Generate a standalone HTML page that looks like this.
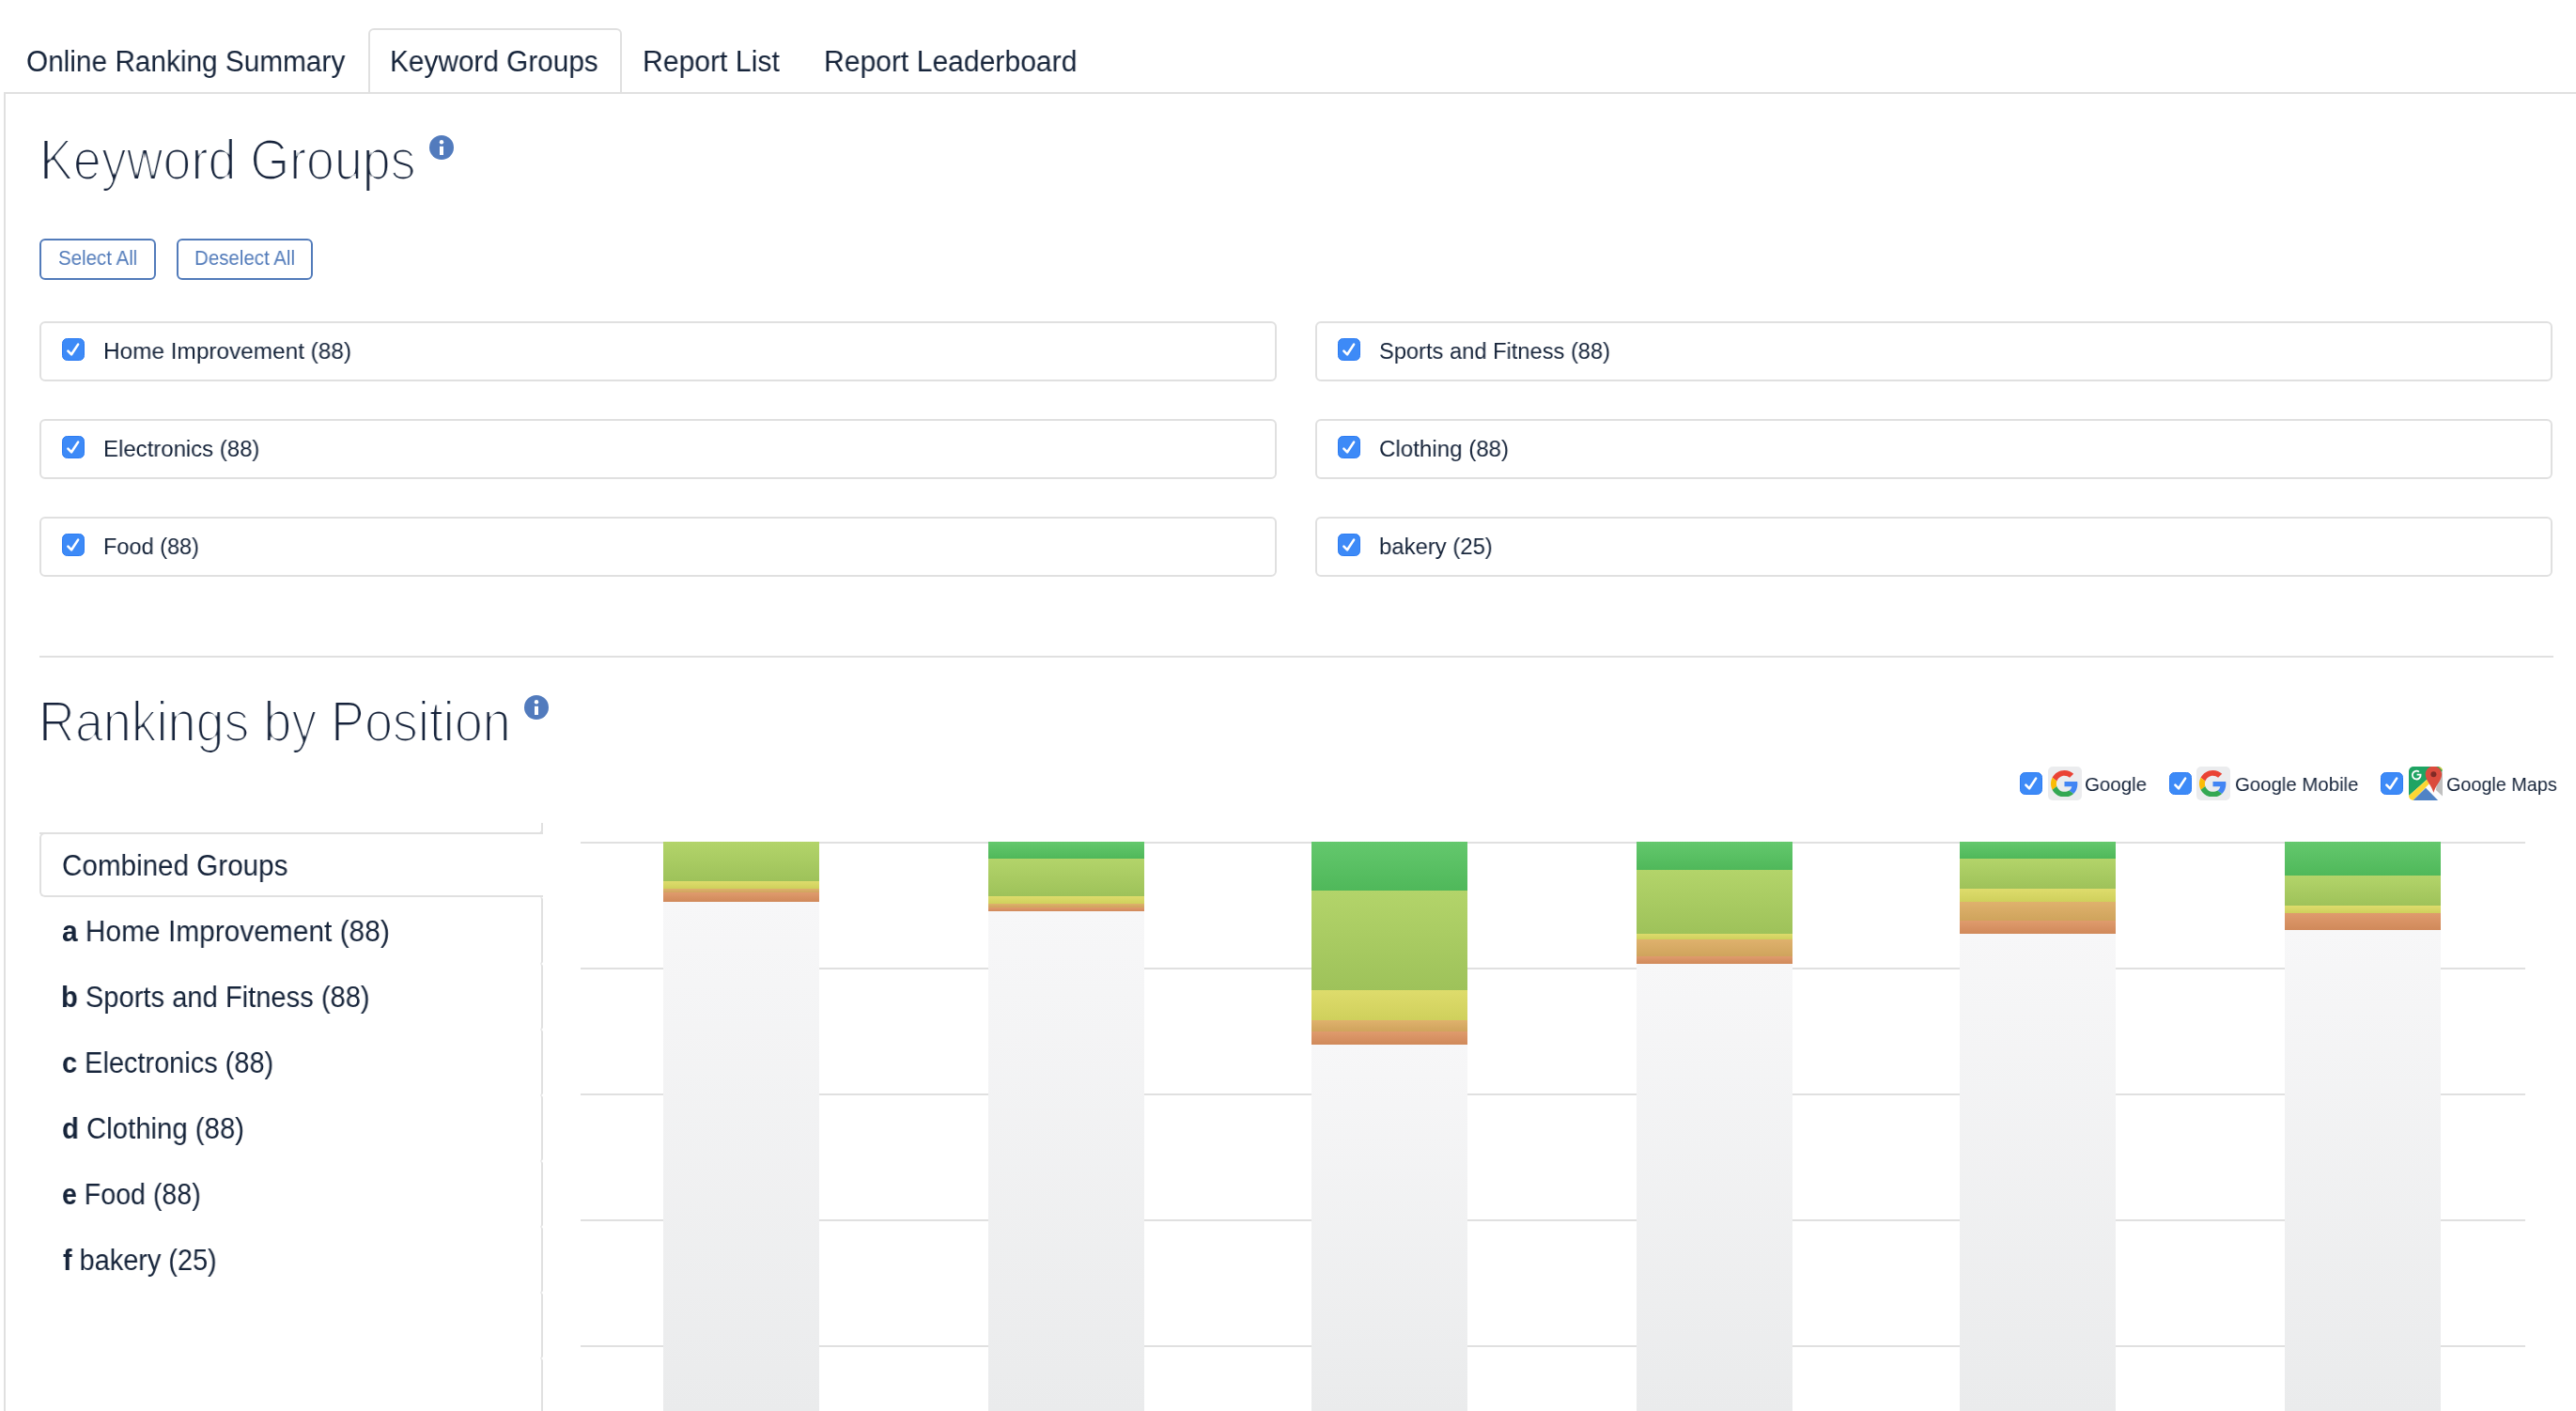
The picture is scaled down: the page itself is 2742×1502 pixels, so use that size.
<!DOCTYPE html>
<html><head><meta charset="utf-8"><title>Keyword Groups</title><style>
html,body{margin:0;padding:0;background:#fff}
body{width:2742px;height:1502px;overflow:hidden;position:relative;font-family:"Liberation Sans",sans-serif}
.a{position:absolute;box-sizing:border-box}
.t{position:absolute;white-space:nowrap;line-height:1;transform-origin:0 0;font-family:"Liberation Sans",sans-serif;will-change:transform}
.t b{font-weight:700}
.bd{border:2px solid #e0e0e0}
.cb{position:absolute;width:24px;height:24px;border-radius:5.5px;background:#3d8af7;box-sizing:border-box;border:1px solid #2c7cf3}
.cb svg{position:absolute;left:-1px;top:-1px}
.info{position:absolute;width:26px;height:26px}
.gbox{position:absolute;width:36px;height:36px;border-radius:5px;background:#ebecee}
.grid{position:absolute;left:618px;width:2070px;height:2px;background:#e0e0e0}
.bar{position:absolute;width:166px}
.bar div{position:absolute;left:0;width:166px}
</style></head><body>
<svg width="0" height="0" style="position:absolute"><defs><filter id="erode" x="-5%" y="-20%" width="110%" height="140%"><feMorphology operator="erode" radius="1"/></filter></defs></svg>
<div class="a bd" style="left:4px;top:98px;width:2800px;height:1500px"></div>
<div class="a" style="left:392px;top:30px;width:270px;height:68px;border:2px solid #e0e0e0;border-bottom:none;border-radius:6px 6px 0 0;background:#fff"></div>
<div class="info" style="left:457px;top:144px"><svg width="26" height="26" viewBox="0 0 26 26"><circle cx="13" cy="13" r="13" fill="#527bbd"/><circle cx="13" cy="7.2" r="2.2" fill="#fff"/><rect x="11" y="11.8" width="4" height="9.2" fill="#fff"/></svg></div>
<div class="info" style="left:557.5px;top:740px"><svg width="26" height="26" viewBox="0 0 26 26"><circle cx="13" cy="13" r="13" fill="#527bbd"/><circle cx="13" cy="7.2" r="2.2" fill="#fff"/><rect x="11" y="11.8" width="4" height="9.2" fill="#fff"/></svg></div>
<div class="a" style="left:42px;top:254px;width:124px;height:44px;border:2px solid #527bba;border-radius:6px"></div>
<div class="a" style="left:188px;top:254px;width:145px;height:44px;border:2px solid #527bba;border-radius:6px"></div>
<div class="a bd" style="left:42px;top:342px;width:1317px;height:64px;border-radius:6px"></div>
<div class="cb" style="left:66px;top:360px"><svg width="24" height="24" viewBox="0 0 24 24"><polyline points="6.4,13.6 10.1,17.3 17.1,6.6" fill="none" stroke="#fff" stroke-width="2.6" stroke-linecap="round" stroke-linejoin="round"/></svg></div>
<div class="a bd" style="left:1400px;top:342px;width:1317px;height:64px;border-radius:6px"></div>
<div class="cb" style="left:1424px;top:360px"><svg width="24" height="24" viewBox="0 0 24 24"><polyline points="6.4,13.6 10.1,17.3 17.1,6.6" fill="none" stroke="#fff" stroke-width="2.6" stroke-linecap="round" stroke-linejoin="round"/></svg></div>
<div class="a bd" style="left:42px;top:446px;width:1317px;height:64px;border-radius:6px"></div>
<div class="cb" style="left:66px;top:464px"><svg width="24" height="24" viewBox="0 0 24 24"><polyline points="6.4,13.6 10.1,17.3 17.1,6.6" fill="none" stroke="#fff" stroke-width="2.6" stroke-linecap="round" stroke-linejoin="round"/></svg></div>
<div class="a bd" style="left:1400px;top:446px;width:1317px;height:64px;border-radius:6px"></div>
<div class="cb" style="left:1424px;top:464px"><svg width="24" height="24" viewBox="0 0 24 24"><polyline points="6.4,13.6 10.1,17.3 17.1,6.6" fill="none" stroke="#fff" stroke-width="2.6" stroke-linecap="round" stroke-linejoin="round"/></svg></div>
<div class="a bd" style="left:42px;top:550px;width:1317px;height:64px;border-radius:6px"></div>
<div class="cb" style="left:66px;top:568px"><svg width="24" height="24" viewBox="0 0 24 24"><polyline points="6.4,13.6 10.1,17.3 17.1,6.6" fill="none" stroke="#fff" stroke-width="2.6" stroke-linecap="round" stroke-linejoin="round"/></svg></div>
<div class="a bd" style="left:1400px;top:550px;width:1317px;height:64px;border-radius:6px"></div>
<div class="cb" style="left:1424px;top:568px"><svg width="24" height="24" viewBox="0 0 24 24"><polyline points="6.4,13.6 10.1,17.3 17.1,6.6" fill="none" stroke="#fff" stroke-width="2.6" stroke-linecap="round" stroke-linejoin="round"/></svg></div>
<div class="a" style="left:42px;top:698px;width:2676px;height:2px;background:#e0e0e0"></div>
<div class="cb" style="left:2150px;top:822px"><svg width="24" height="24" viewBox="0 0 24 24"><polyline points="6.4,13.6 10.1,17.3 17.1,6.6" fill="none" stroke="#fff" stroke-width="2.6" stroke-linecap="round" stroke-linejoin="round"/></svg></div>
<div class="gbox" style="left:2180px;top:816px"><svg width="29" height="28.5" viewBox="0 0 48 48" preserveAspectRatio="none" style="position:absolute;left:3.3px;top:3.8px"><path fill="#EA4335" d="M24 9.5c3.54 0 6.71 1.22 9.21 3.6l6.85-6.85C35.9 2.38 30.47 0 24 0 14.62 0 6.51 5.38 2.56 13.22l7.98 6.19C12.43 13.72 17.74 9.5 24 9.5z"/><path fill="#4285F4" d="M46.98 24.55c0-1.57-.15-3.09-.38-4.55H24v9.02h12.94c-.58 2.96-2.26 5.480-4.78 7.18l7.73 6c4.51-4.18 7.09-10.36 7.09-17.65z"/><path fill="#FBBC05" d="M10.53 28.59c-.48-1.45-.76-2.99-.76-4.59s.27-3.14.76-4.59l-7.98-6.19C.92 16.46 0 20.12 0 24c0 3.88.92 7.54 2.56 10.78l7.97-6.19z"/><path fill="#34A853" d="M24 48c6.48 0 11.930-2.13 15.89-5.81l-7.73-6c-2.15 1.45-4.92 2.3-8.16 2.3-6.26 0-11.57-4.22-13.47-9.91l-7.98 6.19C6.51 42.62 14.62 48 24 48z"/></svg></div>
<div class="cb" style="left:2308.5px;top:822px"><svg width="24" height="24" viewBox="0 0 24 24"><polyline points="6.4,13.6 10.1,17.3 17.1,6.6" fill="none" stroke="#fff" stroke-width="2.6" stroke-linecap="round" stroke-linejoin="round"/></svg></div>
<div class="gbox" style="left:2338px;top:816px"><svg width="29" height="28.5" viewBox="0 0 48 48" preserveAspectRatio="none" style="position:absolute;left:3.3px;top:3.8px"><path fill="#EA4335" d="M24 9.5c3.54 0 6.71 1.22 9.21 3.6l6.85-6.85C35.9 2.38 30.47 0 24 0 14.62 0 6.51 5.38 2.56 13.22l7.98 6.19C12.43 13.72 17.74 9.5 24 9.5z"/><path fill="#4285F4" d="M46.98 24.55c0-1.57-.15-3.09-.38-4.55H24v9.02h12.94c-.58 2.96-2.26 5.480-4.78 7.18l7.73 6c4.51-4.18 7.09-10.36 7.09-17.65z"/><path fill="#FBBC05" d="M10.53 28.59c-.48-1.45-.76-2.99-.76-4.59s.27-3.14.76-4.59l-7.98-6.19C.92 16.46 0 20.12 0 24c0 3.88.92 7.54 2.56 10.78l7.97-6.19z"/><path fill="#34A853" d="M24 48c6.48 0 11.930-2.13 15.89-5.81l-7.73-6c-2.15 1.45-4.92 2.3-8.16 2.3-6.26 0-11.57-4.22-13.47-9.91l-7.98 6.19C6.51 42.62 14.62 48 24 48z"/></svg></div>
<div class="cb" style="left:2534.4px;top:822px"><svg width="24" height="24" viewBox="0 0 24 24"><polyline points="6.4,13.6 10.1,17.3 17.1,6.6" fill="none" stroke="#fff" stroke-width="2.6" stroke-linecap="round" stroke-linejoin="round"/></svg></div>
<div class="gbox" style="left:2564px;top:816px;background:none"><svg width="36" height="36" viewBox="0 0 36 36" style="position:absolute;left:0;top:0">
<defs><clipPath id="mc"><rect x="0" y="0" width="36" height="36" rx="5"/></clipPath></defs>
<g clip-path="url(#mc)">
<rect x="0" y="0" width="36" height="36" fill="#fdfdfd"/>
<polygon points="0,0 36,0 36,4.2 26,14 19.4,13.8 0,31.1" fill="#1fa463"/>
<polygon points="31.5,0 36,0 36,4.5" fill="#fcd633"/>
<polygon points="36,4.2 36,31.5 28.9,24.9 31,12" fill="#c0c0c0"/>
<polygon points="0,31.1 19.4,13.8 21.9,18.2 4.6,36 0,36" fill="#fcd633"/>
<polygon points="4.6,36 18.1,22.7 31.1,36" fill="#5083c5"/>
<path d="M26.4,-0.4 C21.6,-0.4 17.7,3.5 17.7,8.3 C17.7,14.8 24.2,20 26.4,27.8 C28.6,20 35.1,14.8 35.1,8.3 C35.1,3.5 31.2,-0.4 26.4,-0.4 Z" fill="#db4b3d"/>
<circle cx="26.4" cy="8.3" r="3" fill="#802a26"/>
<path d="M10.9,5.6 A4.4,4.4 0 1 0 12.6,8.6 L8.6,8.6" fill="none" stroke="#fff" stroke-width="1.8"/>
</g></svg></div>
<div class="a" style="left:42px;top:876px;width:536px;height:12px;border-right:2px solid #e0e0e0;border-bottom:2px solid #e0e0e0;border-radius:0 0 4px 0"></div>
<div class="a" style="left:42px;top:886px;width:536px;height:69px;border:2px solid #e0e0e0;border-right:none;border-radius:6px 0 0 6px;background:#fff"></div>
<div class="a" style="left:480px;top:955px;width:98px;height:71px;border-right:2px solid #e0e0e0;border-radius:0 3px 3px 0"></div>
<div class="a" style="left:480px;top:1026px;width:98px;height:70px;border-right:2px solid #e0e0e0;border-radius:0 3px 3px 0"></div>
<div class="a" style="left:480px;top:1096px;width:98px;height:70px;border-right:2px solid #e0e0e0;border-radius:0 3px 3px 0"></div>
<div class="a" style="left:480px;top:1166px;width:98px;height:70px;border-right:2px solid #e0e0e0;border-radius:0 3px 3px 0"></div>
<div class="a" style="left:480px;top:1236px;width:98px;height:70px;border-right:2px solid #e0e0e0;border-radius:0 3px 3px 0"></div>
<div class="a" style="left:480px;top:1306px;width:98px;height:70px;border-right:2px solid #e0e0e0;border-radius:0 3px 3px 0"></div>
<div class="a" style="left:480px;top:1376px;width:98px;height:70px;border-right:2px solid #e0e0e0;border-radius:0 3px 3px 0"></div>
<div class="a" style="left:480px;top:1446px;width:98px;height:80px;border-right:2px solid #e0e0e0;border-radius:0 3px 3px 0"></div>
<div class="grid" style="top:896px"></div>
<div class="grid" style="top:1030px"></div>
<div class="grid" style="top:1164px"></div>
<div class="grid" style="top:1298px"></div>
<div class="grid" style="top:1432px"></div>
<div class="bar" style="left:706px;top:896px;height:606px"><div style="top:0px;height:42px;background:linear-gradient(#b3d46a,#9ec25a)"></div><div style="top:42px;height:8px;background:linear-gradient(#dedc6c,#cfd05c)"></div><div style="top:50px;height:4px;background:linear-gradient(#dfb16d,#cfa45c)"></div><div style="top:54px;height:10px;background:linear-gradient(#df9b6d,#d0895a)"></div><div style="top:64px;height:542px;background:linear-gradient(#f7f7f8,#eaebec)"></div></div>
<div class="bar" style="left:1052px;top:896px;height:606px"><div style="top:0px;height:18px;background:linear-gradient(#64c86d,#4fb85a)"></div><div style="top:18px;height:40px;background:linear-gradient(#b3d46a,#9ec25a)"></div><div style="top:58px;height:8px;background:linear-gradient(#dedc6c,#cfd05c)"></div><div style="top:66px;height:4px;background:linear-gradient(#dfb16d,#cfa45c)"></div><div style="top:70px;height:4px;background:linear-gradient(#df9b6d,#d0895a)"></div><div style="top:74px;height:532px;background:linear-gradient(#f7f7f8,#eaebec)"></div></div>
<div class="bar" style="left:1396px;top:896px;height:606px"><div style="top:0px;height:52px;background:linear-gradient(#64c86d,#4fb85a)"></div><div style="top:52px;height:106px;background:linear-gradient(#b3d46a,#9ec25a)"></div><div style="top:158px;height:32px;background:linear-gradient(#dedc6c,#cfd05c)"></div><div style="top:190px;height:12px;background:linear-gradient(#dfb16d,#cfa45c)"></div><div style="top:202px;height:14px;background:linear-gradient(#df9b6d,#d0895a)"></div><div style="top:216px;height:390px;background:linear-gradient(#f7f7f8,#eaebec)"></div></div>
<div class="bar" style="left:1742px;top:896px;height:606px"><div style="top:0px;height:30px;background:linear-gradient(#64c86d,#4fb85a)"></div><div style="top:30px;height:68px;background:linear-gradient(#b3d46a,#9ec25a)"></div><div style="top:98px;height:6px;background:linear-gradient(#dedc6c,#cfd05c)"></div><div style="top:104px;height:18px;background:linear-gradient(#dfb16d,#cfa45c)"></div><div style="top:122px;height:8px;background:linear-gradient(#df9b6d,#d0895a)"></div><div style="top:130px;height:476px;background:linear-gradient(#f7f7f8,#eaebec)"></div></div>
<div class="bar" style="left:2086px;top:896px;height:606px"><div style="top:0px;height:18px;background:linear-gradient(#64c86d,#4fb85a)"></div><div style="top:18px;height:32px;background:linear-gradient(#b3d46a,#9ec25a)"></div><div style="top:50px;height:14px;background:linear-gradient(#dedc6c,#cfd05c)"></div><div style="top:64px;height:20px;background:linear-gradient(#dfb16d,#cfa45c)"></div><div style="top:84px;height:14px;background:linear-gradient(#df9b6d,#d0895a)"></div><div style="top:98px;height:508px;background:linear-gradient(#f7f7f8,#eaebec)"></div></div>
<div class="bar" style="left:2432px;top:896px;height:606px"><div style="top:0px;height:36px;background:linear-gradient(#64c86d,#4fb85a)"></div><div style="top:36px;height:32px;background:linear-gradient(#b3d46a,#9ec25a)"></div><div style="top:68px;height:8px;background:linear-gradient(#dedc6c,#cfd05c)"></div><div style="top:76px;height:18px;background:linear-gradient(#df9b6d,#d0895a)"></div><div style="top:94px;height:512px;background:linear-gradient(#f7f7f8,#eaebec)"></div></div>
<div class="t" style="left:28.33px;top:50.13px;font-size:30.43px;color:#16243a;transform:scaleX(0.9787)">Online Ranking Summary</div>
<div class="t" style="left:415.24px;top:50.13px;font-size:30.43px;color:#16243a;transform:scaleX(0.9788)">Keyword Groups</div>
<div class="t" style="left:683.99px;top:50.13px;font-size:30.43px;color:#16243a;transform:scaleX(0.9908)">Report List</div>
<div class="t" style="left:876.53px;top:50.13px;font-size:30.43px;color:#16243a;transform:scaleX(0.9893)">Report Leaderboard</div>
<div class="t" style="left:42.46px;top:140.26px;font-size:60.87px;color:#16243a;transform:scale(0.8838,1.0000);filter:url(#erode)">Keyword Groups</div>
<div class="t" style="left:62.23px;top:264.89px;font-size:21.30px;color:#527bba;transform:scaleX(0.9620)">Select All</div>
<div class="t" style="left:207.16px;top:264.89px;font-size:21.30px;color:#527bba;transform:scaleX(0.9622)">Deselect All</div>
<div class="t" style="left:109.74px;top:362.06px;font-size:24.64px;color:#16243a;transform:scaleX(0.9893)">Home Improvement (88)</div>
<div class="t" style="left:109.76px;top:466.06px;font-size:24.64px;color:#16243a;transform:scaleX(0.9728)">Electronics (88)</div>
<div class="t" style="left:109.80px;top:570.06px;font-size:24.64px;color:#16243a;transform:scaleX(0.9552)">Food (88)</div>
<div class="t" style="left:1468.42px;top:362.06px;font-size:24.64px;color:#16243a;transform:scaleX(0.9612)">Sports and Fitness (88)</div>
<div class="t" style="left:1468.39px;top:466.06px;font-size:24.64px;color:#16243a;transform:scaleX(0.9792)">Clothing (88)</div>
<div class="t" style="left:1468.41px;top:570.06px;font-size:24.64px;color:#16243a;transform:scaleX(0.9696)">bakery (25)</div>
<div class="t" style="left:40.63px;top:738.26px;font-size:60.87px;color:#16243a;transform:scale(0.8843,1.0000);filter:url(#erode)">Rankings by Position</div>
<div class="t" style="left:2218.87px;top:824.14px;font-size:21.01px;color:#16243a;transform:scaleX(0.9757)">Google</div>
<div class="t" style="left:2378.83px;top:824.14px;font-size:21.01px;color:#16243a;transform:scaleX(0.9706)">Google Mobile</div>
<div class="t" style="left:2603.90px;top:824.14px;font-size:21.01px;color:#16243a;transform:scaleX(0.9423)">Google Maps</div>
<div class="t" style="left:66.12px;top:906.13px;font-size:30.43px;color:#16243a;transform:scaleX(0.9737)">Combined Groups</div>
<div class="t" style="left:66.10px;top:976.13px;font-size:30.43px;color:#16243a;transform:scaleX(0.9823)"><b>a</b> Home Improvement (88)</div>
<div class="t" style="left:65.06px;top:1046.13px;font-size:30.43px;color:#16243a;transform:scaleX(0.9574)"><b>b</b> Sports and Fitness (88)</div>
<div class="t" style="left:66.13px;top:1116.13px;font-size:30.43px;color:#16243a;transform:scaleX(0.9512)"><b>c</b> Electronics (88)</div>
<div class="t" style="left:66.12px;top:1186.13px;font-size:30.43px;color:#16243a;transform:scaleX(0.9641)"><b>d</b> Clothing (88)</div>
<div class="t" style="left:66.14px;top:1256.13px;font-size:30.43px;color:#16243a;transform:scaleX(0.9388)"><b>e</b> Food (88)</div>
<div class="t" style="left:67.18px;top:1326.13px;font-size:30.43px;color:#16243a;transform:scaleX(0.9491)"><b>f</b> bakery (25)</div>
</body></html>
